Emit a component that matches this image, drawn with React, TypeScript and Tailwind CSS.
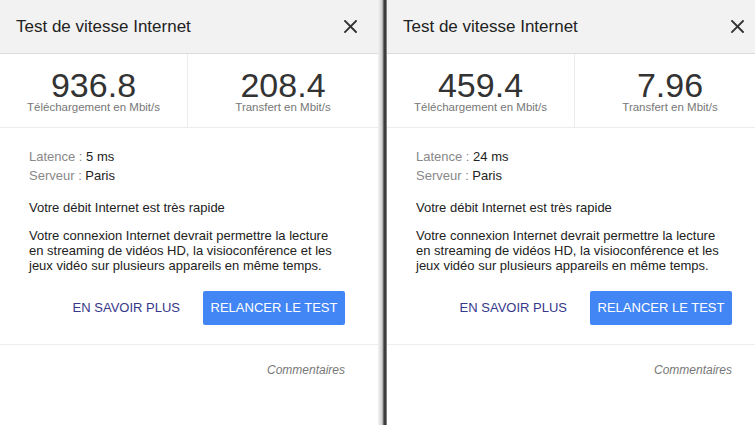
import React from "react";

type PanelData = {
  download: string;
  upload: string;
  latency: string;
};

const panels: PanelData[] = [
  { download: "936.8", upload: "208.4", latency: "5 ms" },
  { download: "459.4", upload: "7.96", latency: "24 ms" },
];

const CloseIcon = () => (
  <svg width="13" height="13" viewBox="0 0 13 13" className="block">
    <path d="M1 1L12 12M12 1L1 12" stroke="#333" strokeWidth="1.9" strokeLinecap="square" />
  </svg>
);

const SpeedPanel: React.FC<{ data: PanelData }> = ({ data }) => {
  return (
    <div className="h-[425px] w-[378px] shrink-0 bg-white">
      <div className="flex h-[54px] items-center justify-between border-b border-[#dcdcdc] bg-[#f2f2f2] pl-[16px] pr-[21px]">
        <span className="text-[17px] leading-[20px] text-[#222]">Test de vitesse Internet</span>
        <CloseIcon />
      </div>

      <div className="grid h-[74px] grid-cols-[188px_190px] border-b border-[#ececec]">
        <div className="flex flex-col items-center border-r border-[#ececec] pt-[15px]">
          <span className="text-[34px] leading-[32px] text-[#333]">{data.download}</span>
          <span className="text-[11.5px] leading-[12px] text-[#777]">Téléchargement en Mbit/s</span>
        </div>
        <div className="flex flex-col items-center pt-[15px]">
          <span className="text-[34px] leading-[32px] text-[#333]">{data.upload}</span>
          <span className="text-[11.5px] leading-[12px] text-[#777]">Transfert en Mbit/s</span>
        </div>
      </div>

      <div className="pl-[29px] pr-[33px] pt-[19px] text-[13px] text-[#222]">
        <div className="leading-[19px]">
          <div>
            <span className="text-[#888]">Latence : </span>
            {data.latency}
          </div>
          <div>
            <span className="text-[#888]">Serveur : </span>
            Paris
          </div>
        </div>
        <p className="mt-[15px] leading-[15px]">Votre débit Internet est très rapide</p>
        <p className="mt-[13px] whitespace-nowrap leading-[15px]">
          Votre connexion Internet devrait permettre la lecture
          <br />
          en streaming de vidéos HD, la visioconférence et les
          <br />
          jeux vidéo sur plusieurs appareils en même temps.
        </p>
        <div className="mt-[18px] flex items-center justify-end gap-[23px]">
          <button className="text-[13px] text-[#36388a]">EN SAVOIR PLUS</button>
          <button className="h-[34px] w-[142px] rounded-[2px] bg-[#4285f4] text-[13px] text-white">
            RELANCER LE TEST
          </button>
        </div>
      </div>

      <div className="mt-[19px] border-t border-[#eeeeee] pr-[33px] pt-[12px] text-right">
        <span className="text-[12px] italic leading-[16px] text-[#777]">Commentaires</span>
      </div>
    </div>
  );
};

export default function App() {
  return (
    <div
      className="flex h-[425px] w-[755px] overflow-hidden bg-white"
      style={{ fontFamily: '"Liberation Sans", Arial, sans-serif' }}
    >
      <SpeedPanel data={panels[0]} />
      <div className="h-full w-[9px] shrink-0 bg-[linear-gradient(to_right,#f4f4f4_0px,#d0d0d0_4px,#9a9a9a_5px,#3c3c3c_6px,#3c3c3c_8px,#c8c8c8_9px)]" />
      <SpeedPanel data={panels[1]} />
    </div>
  );
}
